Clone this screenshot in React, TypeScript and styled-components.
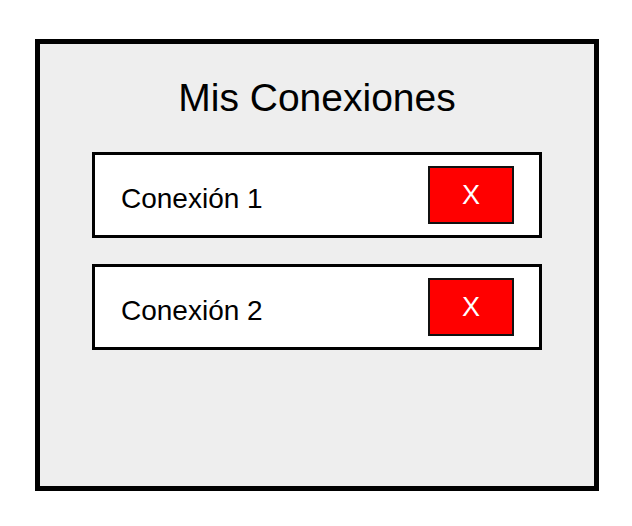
import React from "react";
import styled, { createGlobalStyle } from "styled-components";

const Global = createGlobalStyle`
  html, body { margin: 0; padding: 0; background: #ffffff; }
  body { font-family: "Liberation Sans", Arial, sans-serif; }
`;

const Page = styled.div`
  padding: 39px 0 0 35px;
`;

const Panel = styled.section`
  box-sizing: border-box;
  width: 564px;
  height: 452px;
  border: 5px solid #000;
  background: #eeeeee;
  padding-top: 32px;
  display: flex;
  flex-direction: column;
  align-items: center;
`;

const Title = styled.h1`
  margin: 0;
  font-size: 39px;
  font-weight: 400;
  color: #000;
`;

const List = styled.div`
  margin-top: 32px;
  display: flex;
  flex-direction: column;
  gap: 26px;
`;

const Card = styled.div`
  box-sizing: border-box;
  width: 450px;
  height: 86px;
  border: 3px solid #000;
  background: #fff;
  display: flex;
  align-items: center;
  justify-content: space-between;
  padding: 0 25px 0 26px;
`;

const Label = styled.span`
  font-size: 28px;
  color: #000;
  padding-top: 8px;
`;

const RemoveButton = styled.button`
  box-sizing: border-box;
  width: 86px;
  height: 58px;
  border: 2px solid #111;
  background: #ff0000;
  color: #fff;
  font-family: "Liberation Sans", Arial, sans-serif;
  font-size: 27px;
  padding: 0;
  cursor: pointer;
`;

const connections = ["Conexión 1", "Conexión 2"];

export default function App() {
  return (
    <>
      <Global />
      <Page>
        <Panel>
          <Title>Mis Conexiones</Title>
          <List>
            {connections.map((c) => (
              <Card key={c}>
                <Label>{c}</Label>
                <RemoveButton>X</RemoveButton>
              </Card>
            ))}
          </List>
        </Panel>
      </Page>
    </>
  );
}
